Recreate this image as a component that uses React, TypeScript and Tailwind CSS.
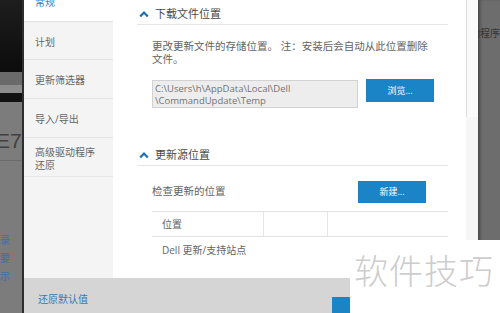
import React from "react";

const SIDE_ITEMS: Array<{ label: React.ReactNode; h: string }> = [
  { label: "计划", h: "h-[38px]" },
  { label: "更新筛选器", h: "h-[39px]" },
  { label: "导入/导出", h: "h-[39px]" },
  {
    label: (
      <>
        高级驱动程序
        <br />
        还原
      </>
    ),
    h: "h-[39px]",
  },
];

function Chevron() {
  return (
    <svg width="10" height="8" viewBox="0 0 10 8" className="shrink-0">
      <polyline
        points="1.2,6.5 5,2.5 8.8,6.5"
        fill="none"
        stroke="#1b6fae"
        strokeWidth="2.2"
      />
    </svg>
  );
}

function SectionHeader({ title }: { title: string }) {
  return (
    <div className="flex items-center gap-[6px] border-b border-[#e6e6e6] pb-[3px] pl-[2px] pt-[7px] text-[11px] leading-[14px] text-[#4a4a4a]">
      <Chevron />
      <span>{title}</span>
    </div>
  );
}

function BlueButton({ label, className }: { label: string; className: string }) {
  return (
    <button
      type="button"
      className={[
        "flex w-[68px] shrink-0 items-center justify-center bg-[#1a84c7] text-[9px] text-white",
        className,
      ].join(" ")}
    >
      {label}
    </button>
  );
}

function LeftBackdrop() {
  return (
    <div className="relative flex w-[24px] shrink-0 flex-col overflow-hidden border-r-2 border-[#2e2e2e]">
      <div className="h-[72px] bg-gradient-to-b from-[#1e1e1e] to-[#0c0c0c]" />
      <div className="h-[13px] bg-[#6a6a6a]" />
      <div className="h-[8px] bg-[#8c8c8c]" />
      <div className="h-[9px] bg-[#121212]" />
      <div className="flex flex-1 flex-col bg-[#7c7c7c]">
        <div className="mt-[28px] -ml-[4px] font-['Liberation_Sans',sans-serif] text-[21px] leading-[22px] text-[#404040]">
          E7
        </div>
        <div className="mt-[8px] h-px bg-[#6c6c6c]" />
        <div className="mt-[70px] flex flex-col font-['Noto_Sans_CJK_SC',sans-serif] text-[10px] leading-[18px] text-[#3a6fb0]">
          <span className="-ml-[10px]">记录</span>
          <span className="-ml-[10px]">摘要</span>
          <span className="-ml-[10px]">显示</span>
        </div>
      </div>
    </div>
  );
}

function RightBackdrop() {
  return (
    <div className="flex w-[22px] shrink-0 flex-col overflow-hidden bg-[#6d6d6d] shadow-[inset_3px_0_3px_-1px_rgba(0,0,0,0.35)]">
      <div className="mt-[26px] -ml-[8px] whitespace-nowrap font-['Noto_Sans_CJK_SC',sans-serif] text-[10px] leading-[14px] text-[#333]">
        动程序
      </div>
    </div>
  );
}

export default function App() {
  return (
    <div className="relative flex h-[313px] w-[500px] overflow-hidden bg-[#7c7c7c] font-['Open_Sans','Noto_Sans_CJK_SC',sans-serif]">
      <LeftBackdrop />

      <div className="flex w-[454px] shrink-0 flex-col bg-white">
        <div className="flex h-[278px] shrink-0">
          <aside className="flex w-[89px] shrink-0 flex-col bg-[#f4f4f4] text-[10px] leading-[13px] text-[#666]">
            <div className="flex h-[21px] items-end bg-white pb-[12px] pl-[11px] text-[#2f7bbd]">
              常规
            </div>
            {SIDE_ITEMS.map((item, i) => (
              <div
                key={i}
                className={[
                  "flex items-center border-t border-[#e2e2e2] pl-[11px] pt-[3px]",
                  item.h,
                ].join(" ")}
              >
                <span>{item.label}</span>
              </div>
            ))}
            <div className="border-t border-[#e8e8e8]" />
          </aside>

          <main className="flex w-[353px] shrink-0 flex-col pl-[24px] pr-[18px] text-[#636363]">
            <SectionHeader title="下载文件位置" />
            <p className="mt-[15px] pl-[15px] text-[10.5px] leading-[13px]">
              更改更新文件的存储位置。 注：安装后会自动从此位置删除
              <br />
              文件。
            </p>
            <div className="mt-[14px] flex gap-[8px] pl-[15px]">
              <div className="h-[28px] w-[206px] border border-[#d2d2d2] bg-[#ededed] px-[2px] py-[2px] text-[9.5px] leading-[12px] text-[#737373]">
                C:\Users\h\AppData\Local\Dell
                <br />
                \CommandUpdate\Temp
              </div>
              <BlueButton label="浏览..." className="-mt-px h-[23px]" />
            </div>

            <div className="mt-[33px]">
              <SectionHeader title="更新源位置" />
            </div>
            <div className="mt-[15px] flex h-[22px] w-[289px] items-center justify-between pl-[15px] text-[10.5px]">
              <span>检查更新的位置</span>
              <BlueButton label="新建..." className="h-[22px]" />
            </div>
            <div className="mt-[8px] ml-[15px] w-[296px] text-[10px]">
              <div className="flex h-[26px] border-y border-[#e4e4e4]">
                <div className="flex w-[112px] items-center border-r border-[#e4e4e4] pl-[10px]">
                  位置
                </div>
                <div className="w-[64px] border-r border-[#e4e4e4]" />
                <div className="flex-1" />
              </div>
              <div className="flex h-[26px] items-center pl-[10px]">
                Dell 更新/支持站点
              </div>
            </div>
          </main>

          <div className="flex w-[12px] shrink-0 flex-col bg-[#f6f6f6]">
            <div className="h-[117px] border-l border-[#dcdcdc] bg-[#fafafa]" />
          </div>
        </div>

        <footer className="flex flex-1 bg-[#d5d5d5] pl-[14px]">
          <span className="mt-[14px] text-[10px] leading-[14px] text-[#3579b6]">
            还原默认值
          </span>
          <div className="ml-auto mr-[2px] mt-[19px] flex gap-[8px]">
            <BlueButton label="确定" className="h-[23px]" />
            <BlueButton label="取消" className="h-[23px]" />
          </div>
        </footer>
      </div>

      <RightBackdrop />

      <div className="absolute bottom-0 right-0 flex h-[73px] w-[150px] items-start bg-white pl-[4px] pt-[10px]">
        <span className="font-['Noto_Sans_CJK_SC',sans-serif] text-[34px] font-light leading-[40px] tracking-[1px] text-[#cdcdcd]">
          软件技巧
        </span>
      </div>
    </div>
  );
}
